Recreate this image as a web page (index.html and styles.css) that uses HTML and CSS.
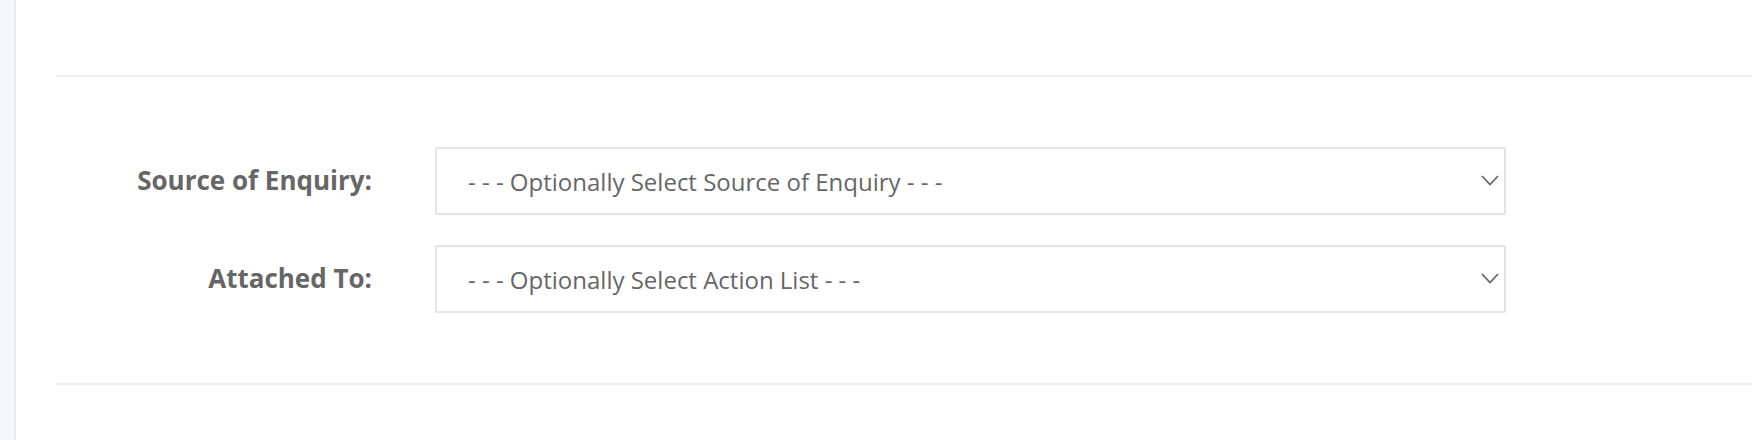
FILE: index.html
```html
<!DOCTYPE html>
<html>
    <head>
        <meta charset="utf-8">
        <title>Enquiry Details</title>
        <meta name="viewport" content="width=device-width, initial-scale=1">
        <link rel="stylesheet" href="styles.css">
    </head>
    <body>
        <div class="page">
            <div class="sidebar"></div>
            <div class="content">
                <div class="section">
                    <div class="row">
                        <label for="source">Source of Enquiry:</label>
                        <div class="select-wrap">
                            <select name="source" id="source">
                                <option>- - - Optionally Select Source of Enquiry - - -</option>
                            </select>
                            <svg class="chevron" width="18" height="11" viewBox="0 0 18 11"><path d="M1 1 L9 9.5 L17 1" fill="none" stroke="#666" stroke-width="1.8"/></svg>
                        </div>
                    </div>
                    <div class="row">
                        <label for="attached">Attached To:</label>
                        <div class="select-wrap">
                            <select name="attached" id="attached">
                                <option>- - - Optionally Select Action List - - -</option>
                            </select>
                            <svg class="chevron" width="18" height="11" viewBox="0 0 18 11"><path d="M1 1 L9 9.5 L17 1" fill="none" stroke="#666" stroke-width="1.8"/></svg>
                        </div>
                    </div>
                </div>
            </div>
        </div>
    </body>
</html>
```

FILE: styles.css
```css
body{
    margin: 0;
    background-color: white;
    font-family: "Open Sans", "Liberation Sans", sans-serif;
    color: #666;
}
.page{
    display: flex;
    height: 440px;
}
.sidebar{
    width: 14px;
    background-color: #f4f6fa;
    border-right: 2px solid #e8e9ed;
}
.content{
    flex-grow: 1;
    padding: 75px 0 0 40px;
}
.section{
    border-top: 2px solid #eeeeef;
    border-bottom: 2px solid #eeeeef;
    padding: 70px 0 70px 0;
    display: flex;
    flex-direction: column;
    gap: 30px;
}
.row{
    display: flex;
    align-items: center;
}
label{
    width: 316px;
    text-align: right;
    font-weight: bold;
    font-size: 26px;
    margin-right: 63px;
    padding-bottom: 3px;
    white-space: nowrap;
}
.select-wrap{
    position: relative;
    width: 1071px;
}
select{
    appearance: none;
    -webkit-appearance: none;
    display: block;
    width: 100%;
    height: 68px;
    border: 2px solid #e4e4e4;
    border-radius: 2px;
    background-color: white;
    padding: 0 0 0 31px;
    font-family: "Open Sans", "Liberation Sans", sans-serif;
    font-size: 24px;
    color: #666;
}
.chevron{
    position: absolute;
    right: 7px;
    top: 28px;
}
```
